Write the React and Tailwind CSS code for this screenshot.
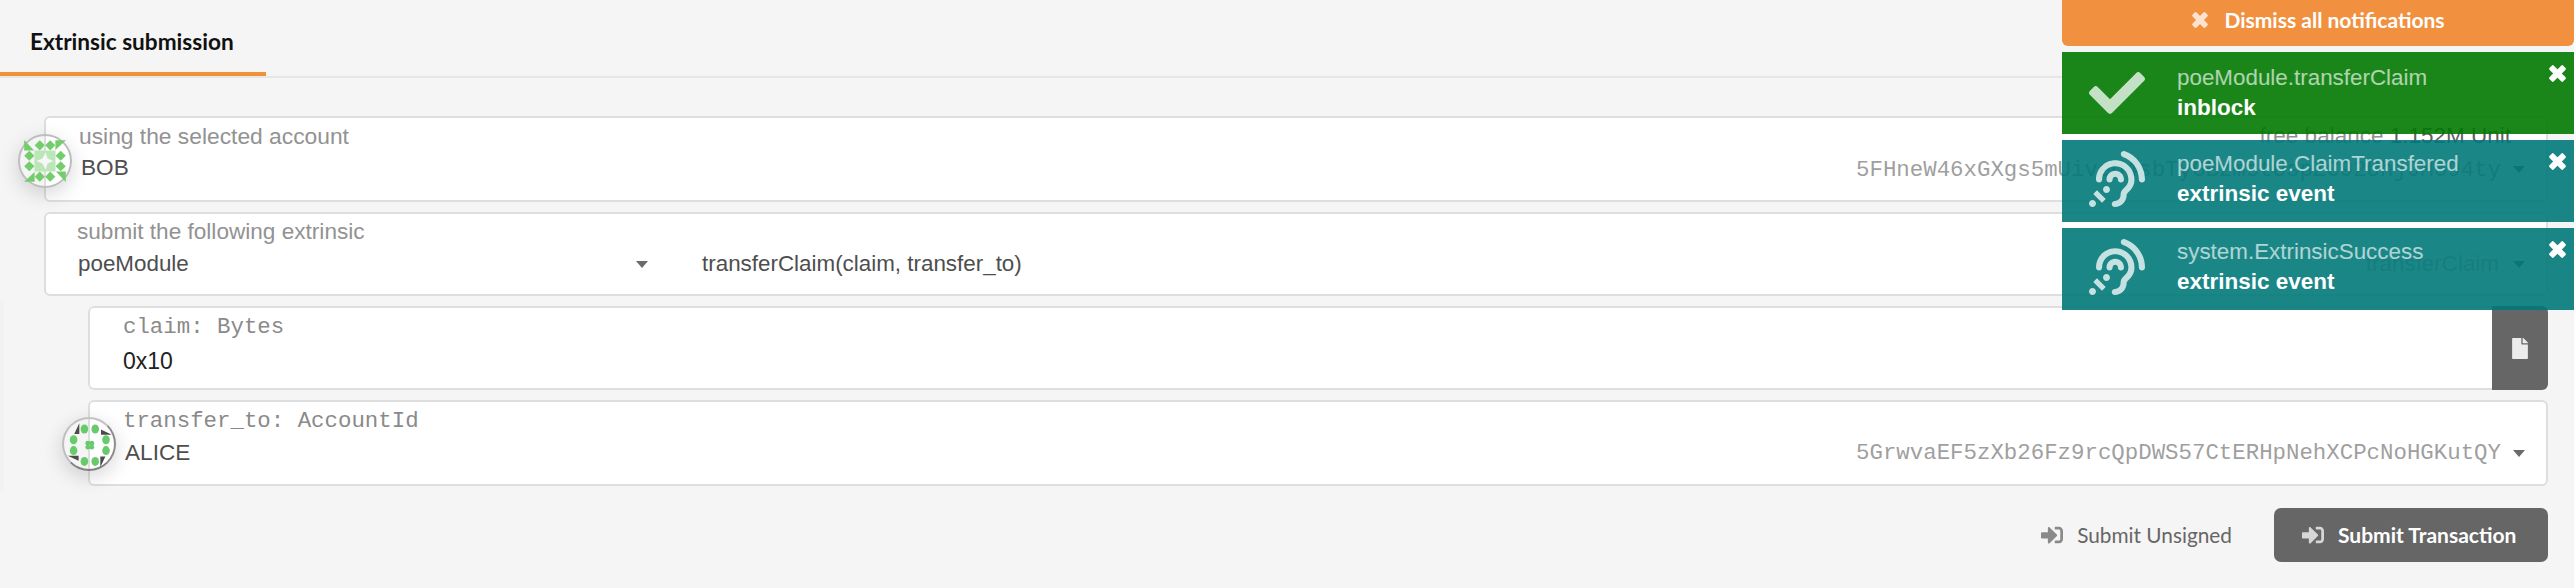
import React from "react";
import {
  FaAssistiveListeningSystems,
  FaCheck,
  FaFile,
  FaSignInAlt,
} from "react-icons/fa";

const CORNERS = [0, 90, 180, 270];
const DOTS = [
  [-5.4, -16.2],
  [5.4, -16.2],
  [16.2, -5.4],
  [16.2, 5.4],
  [5.4, 16.2],
  [-5.4, 16.2],
  [-16.2, 5.4],
  [-16.2, -5.4],
];

function Identicon({ variant }) {
  const ring =
    "relative block h-[54px] w-[54px] shrink-0 rounded-full border-2 shadow-[0_6px_20px_rgba(0,0,0,0.16)] ";
  if (variant === "bob") {
    return (
      <span className={ring + "border-[#bdbdbd]"}>
        <svg viewBox="-25 -25 50 50" className="block h-full w-full">
          <rect x="-10.5" y="-10.5" width="21" height="21" fill="#bbe6b7" />
          <path d="M.6-8.5 2.6-2.6 8.5 0 2.6 2.6 .6 8.5-2.6 2.6-8.5 0-2.6-2.6Z" fill="#f7f7f7" />
          {CORNERS.map((a) => (
            <g key={a} transform={`rotate(${a})`} fill="#73cd6b">
              <path d="M-5.2-20.8-.2-15.7-5.2-10.6-10.3-15.7Z" />
              <path d="M5.2-20.8 10.3-15.7 5.2-10.6 .2-15.7Z" />
              <path d="M-20.8-20.9-10.9-10.4H-20.8Z" />
            </g>
          ))}
        </svg>
      </span>
    );
  }
  return (
    <span className={ring + "border-t-[#c2c2c2] border-r-[#8c8c8c] border-b-[#808080] border-l-[#bdbdbd]"}>
      <svg viewBox="-25.8 -26.2 50 50" className="block h-full w-full">
        {CORNERS.map((a) => (
          <g key={a} transform={`rotate(${a})`}>
            <path d="M-10.5-22V-11.2H-15.6Z" fill="#4b4b4b" />
            <circle cx="-2" cy="-2" r="2.4" fill="#68cb6b" />
          </g>
        ))}
        {DOTS.map(([x, y]) => (
          <ellipse key={`${x},${y}`} cx={x} cy={y} rx="3.8" ry="4.5" fill="#68cb6b" />
        ))}
      </svg>
    </span>
  );
}

function Caret() {
  return (
    <svg viewBox="0 0 12 7" className="h-[7px] w-3 shrink-0 text-[#6a6a6a]">
      <path d="M0 0H12L6 7Z" fill="currentColor" />
    </svg>
  );
}

function Cross({ className }) {
  return (
    <svg viewBox="-8.5 -8.5 17 17" fill="currentColor" className={"shrink-0 " + className}>
      <rect x="-9.6" y="-3" width="19.2" height="6" rx="1.5" transform="rotate(45)" />
      <rect x="-9.6" y="-3" width="19.2" height="6" rx="1.5" transform="rotate(-45)" />
    </svg>
  );
}

function AccountField({ label, variant, name, address, className, iconClass, addressClass }) {
  return (
    <div className={"flex h-[86px] rounded-[6px] border-2 border-[#dedede] bg-white " + className}>
      <div className={"-ml-7 w-[54px] shrink-0 " + iconClass}>
        <Identicon variant={variant} />
      </div>
      <div className="min-w-0 grow pr-[21px] pl-[7px]">
        {label}
        <div className="flex h-8 items-center justify-between">
          <span className="pl-[2px] text-[22.6px] leading-8 text-[#4e4e4e]">{name}</span>
          <span className={"flex items-center gap-3 " + addressClass}>
            <span className="font-['Liberation_Mono',monospace] text-[22.4px] leading-8 text-[#9f9f9f]">
              {address}
            </span>
            <Caret />
          </span>
        </div>
      </div>
    </div>
  );
}

function Notice({ tone, icon, title, status, offset }) {
  return (
    <div className={"flex h-[82px] w-full text-white " + tone}>
      <div className="flex w-[115px] shrink-0 items-center pl-[27px]">{icon}</div>
      <div className={"grow " + offset}>
        <div className="h-[30px] text-[22.4px] leading-[30px] text-white/65">{title}</div>
        <div className="h-[30px] text-[22.5px] leading-[30px] font-bold">{status}</div>
      </div>
      <Cross className="mt-[13px] mr-2 h-[17px] w-[17px]" />
    </div>
  );
}

export default function App() {
  const lato = "font-['Lato',sans-serif] ";
  const light = "text-[#929292] ";
  return (
    <div className="relative h-[588px] w-[2574px] overflow-hidden bg-[#f5f5f5] font-['Liberation_Sans',Arial,sans-serif]">
      <div className="absolute top-[300px] left-0 h-[191px] w-1 bg-[#f2f2f2]" />

      <header className="flex h-[78px] items-stretch border-b-2 border-[#e6e6e6]">
        <div className={lato + "h-[76px] w-[266px] border-b-4 border-[#f19135] pt-[26px] pl-[30px] text-[22.6px] leading-8 font-bold text-[#111]"}>
          Extrinsic submission
        </div>
      </header>

      <main className="flex flex-col pt-[38px] pr-[26px] pl-11">
        <AccountField
          className="pt-[2px]"
          iconClass="mt-[14px]"
          addressClass="pt-[3px]"
          variant="bob"
          name="BOB"
          address="5FHneW46xGXgs5mUiveU4sbTyGBzmstUspZC92UhjJM694ty"
          label={
            <div className={light + "flex justify-between pr-[14px] text-[22.8px] leading-8"}>
              <span>using the selected account</span>
              <span className="text-[22.5px]">
                free balance <span className="text-[#5e5e5e]">1.152M Unit</span>
              </span>
            </div>
          }
        />

        <div className="mt-[10px] h-[84px] rounded-[6px] border-2 border-[#dedede] bg-white pt-[2px] pr-[21px] pl-8">
          <div className={light + "-ml-px text-[22.6px] leading-8"}>submit the following extrinsic</div>
          <div className="flex h-8 items-center text-[22.4px] leading-8 text-[#4e4e4e]">
            <div className="flex w-[570px] items-center justify-between">
              <span>poeModule</span>
              <Caret />
            </div>
            <div className="flex grow items-center pl-[54px]">
              <span className="grow">transferClaim(claim, transfer_to)</span>
              <span className="mr-[14px] text-[#b5b5b5]">transferClaim</span>
              <Caret />
            </div>
          </div>
        </div>

        <div className="mt-[10px] ml-11 flex h-[84px] overflow-hidden rounded-[6px]">
          <div className="grow rounded-l-[6px] border-2 border-r-0 border-[#dedede] bg-white pt-[3px] pl-[33px]">
            <div className="font-['Liberation_Mono',monospace] text-[22.4px] leading-8 text-[#8a8a8a]">
              claim: Bytes
            </div>
            <div className="mt-[2px] text-[23px] leading-8 text-[#222]">0x10</div>
          </div>
          <div className="flex w-14 items-center justify-center bg-[#666]">
            <FaFile className="h-[21px] w-4 text-[#ebebeb]" />
          </div>
        </div>

        <AccountField
          className="mt-[10px] ml-11 pt-[3px]"
          iconClass="mt-3"
          addressClass=""
          variant="alice"
          name="ALICE"
          address="5GrwvaEF5zXb26Fz9rcQpDWS57CtERHpNehXCPcNoHGKutQY"
          label={
            <div className="font-['Liberation_Mono',monospace] text-[22.4px] leading-8 text-[#8a8a8a]">
              transfer_to: AccountId
            </div>
          }
        />

        <div className={lato + "mt-[22px] flex h-[54px] items-center justify-end text-[20.8px] text-[#666]"}>
          <button className="flex items-center gap-[14px] pr-[42px]">
            <FaSignInAlt className="h-[22px] w-[22px] text-[#8a8a8a]" />
            <span>Submit Unsigned</span>
          </button>
          <button className="flex h-[54px] w-[274px] items-center gap-[14px] rounded-[7px] bg-[#666] pl-7 text-[21px] font-bold text-white">
            <FaSignInAlt className="h-[22px] w-[22px] text-[#d6d6d6]" />
            <span>Submit Transaction</span>
          </button>
        </div>
      </main>

      <aside className="absolute top-0 right-0 flex w-[512px] flex-col gap-[6px]">
        <button className={lato + "flex h-[46px] items-center justify-center gap-4 rounded-b-[6px] bg-[#f19140] pb-[6px] pl-px text-[21px] leading-8 font-bold text-white"}>
          <Cross className="h-4 w-4 text-[#fbe3cf]" />
          <span>Dismiss all notifications</span>
        </button>
        <Notice
          tone="bg-[#007900e4]"
          offset="pt-[11px]"
          title="poeModule.transferClaim"
          status="inblock"
          icon={<FaCheck className="h-14 w-14 text-white/75" />}
        />
        <Notice
          tone="bg-[#007878e4]"
          offset="pt-[9px]"
          title="poeModule.ClaimTransfered"
          status="extrinsic event"
          icon={<FaAssistiveListeningSystems className="mb-1 h-14 w-14 text-white/75" />}
        />
        <Notice
          tone="bg-[#007878e4]"
          offset="pt-[9px]"
          title="system.ExtrinsicSuccess"
          status="extrinsic event"
          icon={<FaAssistiveListeningSystems className="mb-1 h-14 w-14 text-white/75" />}
        />
      </aside>
    </div>
  );
}
